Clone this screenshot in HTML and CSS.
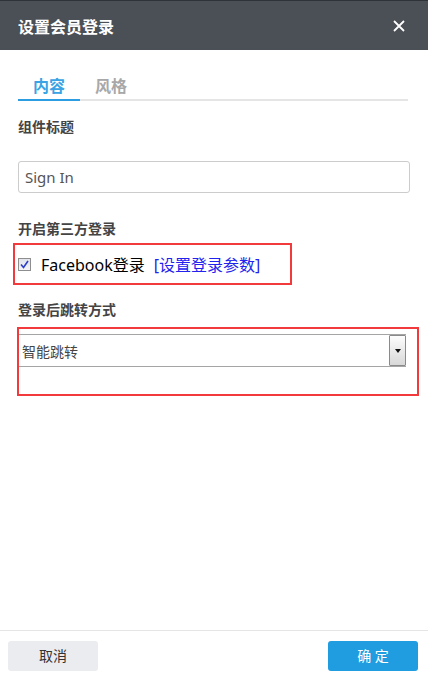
FILE: index.html
```html
<!DOCTYPE html>
<html lang="zh-CN">
<head>
    <meta charset="UTF-8" />
    <title>设置会员登录</title>
    <link rel="stylesheet" href="styles.css">
</head>
<body>
<div class="dialog">
    <div class="dialog_head">
        <h2>设置会员登录</h2>
        <a class="close" href="javascript:;">
            <svg width="12" height="12" viewBox="0 0 12 12"><path d="M1 1L11 11M11 1L1 11" stroke="#fff" stroke-width="1.8" fill="none"/></svg>
        </a>
    </div>
    <div class="dialog_body">
        <ul class="tabs">
            <li class="on">内容</li>
            <li>风格</li>
        </ul>
        <p class="label first">组件标题</p>
        <div class="text_input">Sign In</div>
        <p class="label">开启第三方登录</p>
        <div class="mark mark_check">
            <span class="check">
                <svg width="9" height="9" viewBox="0 0 9 9"><path d="M1 4.5L3.5 7.5L8 1" stroke="#2b3fc8" stroke-width="1.6" fill="none"/></svg>
            </span>
            <span class="fb">Facebook登录</span>
            <a class="set_link" href="javascript:;">[设置登录参数]</a>
        </div>
        <p class="label">登录后跳转方式</p>
        <div class="mark mark_select">
            <div class="select">
                <span class="select_text">智能跳转</span>
                <span class="select_btn"><i></i></span>
            </div>
        </div>
    </div>
    <div class="dialog_foot">
        <a class="btn btn_cancel" href="javascript:;">取消</a>
        <a class="btn btn_ok" href="javascript:;">确 定</a>
    </div>
</div>
</body>
</html>
```

FILE: styles.css
```css
body{
    margin:0;
    font-family:"Noto Sans","Noto Sans CJK SC",sans-serif;
}
ul,p,h2{
    padding:0;
    margin:0;
}
a{
    text-decoration:none;
}
.dialog{
    width:428px;
    height:680px;
    display:flex;
    flex-direction:column;
    background:#fff;
}
.dialog_head{
    height:49px;
    border-top:1px solid #2f3236;
    background:#4b4f56;
    display:flex;
    align-items:center;
    justify-content:space-between;
    padding:0 18px;
}
.dialog_head h2{
    font-size:16px;
    font-weight:bold;
    color:#fff;
    line-height:20px;
    margin-top:2px;
}
.close{
    display:flex;
    margin-right:5px;
    margin-top:1px;
}

.dialog_body{
    flex:1;
    padding:0 18px;
}
.tabs{
    display:flex;
    margin-top:25px;
    margin-right:2px;
    border-bottom:2px solid #e5e5e5;
}
.tabs li{
    list-style:none;
    width:62px;
    text-align:center;
    font-size:16px;
    font-weight:bold;
    line-height:22px;
    padding-bottom:2px;
    margin-bottom:-2px;
    color:#a8a8a8;
    border-bottom:2px solid transparent;
}
.tabs li.on{
    color:#3aa3e3;
    border-bottom-color:#2b9de0;
}
.label{
    font-size:14px;
    font-weight:bold;
    line-height:20px;
    color:#444;
    margin-top:16px;
}
.text_input{
    margin-top:24px;
    height:30px;
    border:1px solid #ccc;
    border-radius:3px;
    padding:0 6px;
    font-size:15px;
    line-height:30px;
    color:#555;
}
.text_input + .label{
    margin-top:26px;
}

/* 红框标注 */
.mark{
    border:2px solid #f23a3d;
    box-sizing:border-box;
}
.mark_check{
    margin:4px 0 0 -5px;
    width:279px;
    height:42px;
    padding-left:3px;
    display:flex;
    align-items:center;
}
.check{
    width:11px;
    height:11px;
    border:1px solid #8e8e8e;
    background:linear-gradient(#e2e4ec,#f4f4f8);
    display:flex;
    align-items:center;
    justify-content:center;
}
.fb{
    font-size:16px;
    color:#000;
    margin-left:10px;
}
.set_link{
    font-size:16px;
    color:#2222ee;
    margin-left:9px;
}
.mark_check + .label{
    margin-top:15px;
}

.mark_select{
    margin:7px 0 0 -1px;
    width:402px;
    height:69px;
    padding-top:5px;
}
.select{
    width:387px;
    height:31px;
    border-top:1px solid #a5a5a5;
    border-bottom:1px solid #a5a5a5;
    display:flex;
    align-items:center;
    justify-content:space-between;
}
.select_text{
    font-size:14px;
    color:#444;
    margin-left:3px;
}
.select_btn{
    width:15px;
    height:29px;
    border:1px solid #8a8a8a;
    border-radius:1px;
    background:linear-gradient(#fdfdfd,#d8d8d8);
    display:flex;
    align-items:center;
    justify-content:center;
}
.select_btn i{
    width:0;
    height:0;
    border-left:3px solid transparent;
    border-right:3px solid transparent;
    border-top:4px solid #111;
}

.dialog_foot{
    border-top:1px solid #e5e5e5;
    display:flex;
    justify-content:space-between;
    padding:10px 10px 9px 8px;
}
.btn{
    width:90px;
    height:30px;
    line-height:30px;
    text-align:center;
    font-size:14px;
    border-radius:3px;
}
.btn_cancel{
    background:#ebecf0;
    color:#333;
}
.btn_ok{
    background:#1f9de0;
    color:#fff;
}
```
